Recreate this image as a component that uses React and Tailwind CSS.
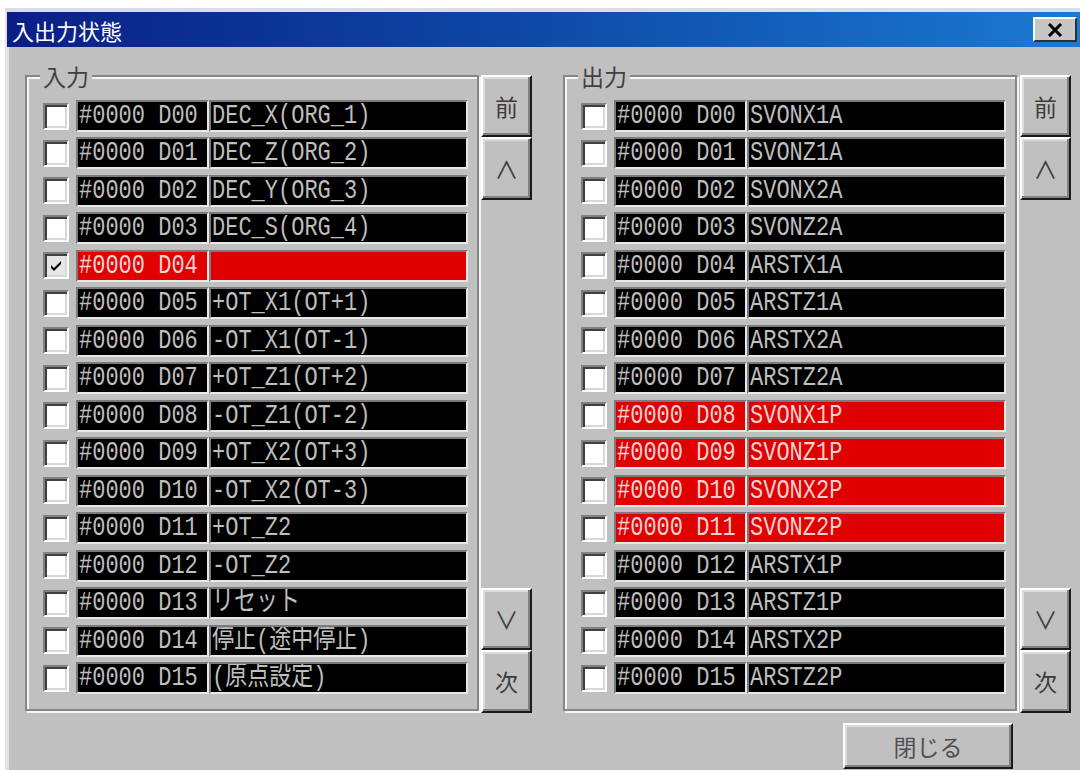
import React from "react";

const inputs = [
  ["D00", "DEC_X(ORG_1)"],
  ["D01", "DEC_Z(ORG_2)"],
  ["D02", "DEC_Y(ORG_3)"],
  ["D03", "DEC_S(ORG_4)"],
  ["D04", "", true, true],
  ["D05", "+OT_X1(OT+1)"],
  ["D06", "-OT_X1(OT-1)"],
  ["D07", "+OT_Z1(OT+2)"],
  ["D08", "-OT_Z1(OT-2)"],
  ["D09", "+OT_X2(OT+3)"],
  ["D10", "-OT_X2(OT-3)"],
  ["D11", "+OT_Z2"],
  ["D12", "-OT_Z2"],
  ["D13", "リセット"],
  ["D14", "停止(途中停止)"],
  ["D15", "(原点設定)"],
];

const outputs = [
  ["D00", "SVONX1A"],
  ["D01", "SVONZ1A"],
  ["D02", "SVONX2A"],
  ["D03", "SVONZ2A"],
  ["D04", "ARSTX1A"],
  ["D05", "ARSTZ1A"],
  ["D06", "ARSTX2A"],
  ["D07", "ARSTZ2A"],
  ["D08", "SVONX1P", true],
  ["D09", "SVONZ1P", true],
  ["D10", "SVONX2P", true],
  ["D11", "SVONZ2P", true],
  ["D12", "ARSTX1P"],
  ["D13", "ARSTZ1P"],
  ["D14", "ARSTX2P"],
  ["D15", "ARSTZ2P"],
];

const mono = { fontFamily: '"Liberation Mono", "Noto Sans CJK JP", monospace' };
const jp = { fontFamily: '"Noto Sans CJK JP", sans-serif' };

function CheckBox({ checked }) {
  return (
    <div
      className={`w-[26px] h-[27px] shrink-0 border-2 border-t-[#808080] border-l-[#808080] border-b-white border-r-white shadow-[inset_2px_2px_0_#404040,inset_-2px_-2px_0_#d8d8d8] flex items-center justify-center ${
        checked ? "bg-[#e6e6e6]" : "bg-white"
      }`}
    >
      {checked && (
        <svg width="14" height="14" viewBox="0 0 14 14">
          <path d="M2 6 L5 9 L12 2 L12 5 L5 12 L2 9 Z" fill="#000" />
        </svg>
      )}
    </div>
  );
}

function Field({ text, red, width }) {
  return (
    <div
      className={`h-[32px] shrink-0 border-2 border-t-[#7a7a7a] border-l-[#7a7a7a] border-b-[#e8e8e8] border-r-[#e8e8e8] flex items-center pl-[1px] overflow-hidden whitespace-pre text-[22px] ${
        red ? "bg-[#e10000] text-[#f6d2d2]" : "bg-black text-[#bebebe]"
      } ${width}`}
      style={mono}
    >
      <span className="inline-block leading-[26px] scale-y-125 translate-y-[1px]">{text}</span>
    </div>
  );
}

function Row({ row }) {
  const [addr, label, red, checked] = row;
  return (
    <div className="flex items-center h-[32px]">
      <CheckBox checked={checked} />
      <div className="flex ml-[7px]">
        <Field text={`#0000 ${addr}`} red={red} width="w-[133px]" />
        <Field text={label} red={red} width="w-[259px]" />
      </div>
    </div>
  );
}

function Group({ title, rows }) {
  return (
    <div className="relative w-[454px] h-[636px] border-2 border-[#868686] shadow-[inset_2px_2px_0_#f4f4f4,2px_2px_0_#f4f4f4]">
      <div
        className="absolute -top-[14px] left-[13px] px-[3px] bg-[#c0c0c0] text-[23px] leading-[26px] text-[#404040]"
        style={jp}
      >
        {title}
      </div>
      <div className="flex flex-col gap-[5.47px] pt-[23px] pl-[16px]">
        {rows.map((r) => (
          <Row key={r[0]} row={r} />
        ))}
      </div>
    </div>
  );
}

function PushButton({ children, className = "" }) {
  return (
    <div
      className={`flex items-center justify-center bg-[#c0c0c0] border-2 border-t-white border-l-white border-r-[#1a1a1a] border-b-[#1a1a1a] shadow-[inset_-2px_-2px_0_#808080,inset_2px_2px_0_#dcdcdc] text-[#3c3c3c] ${className}`}
      style={jp}
    >
      {children}
    </div>
  );
}

function Pager() {
  return (
    <div className="w-[51px] h-[638px] flex flex-col justify-between">
      <div className="flex flex-col">
        <PushButton className="h-[62px] text-[23px]">前</PushButton>
        <PushButton className="h-[63px] text-[24px]">∧</PushButton>
      </div>
      <div className="flex flex-col">
        <PushButton className="h-[62px] text-[24px]">∨</PushButton>
        <PushButton className="h-[63px] text-[23px]">次</PushButton>
      </div>
    </div>
  );
}

export default function App() {
  return (
    <div className="w-[1080px] h-[770px] bg-white pt-[8px] pl-[5px] overflow-hidden">
      <div className="h-[762px] bg-[#c0c0c0] border-t-[4px] border-l-[4px] border-t-[#d9dde6] border-l-[#e2e2e2] flex flex-col">
        {/* title bar */}
        <div className="h-[35px] ml-[-2px] bg-gradient-to-r from-[#0b1d86] via-[#0f4aa8] to-[#1c7ad2] flex items-center justify-between pl-[5px] pr-[3px]">
          <span className="text-white text-[22px] leading-none" style={jp}>
            入出力状態
          </span>
          <div className="w-[44px] h-[25px] bg-[#c6c6c6] border-2 border-t-white border-l-white border-r-[#303030] border-b-[#303030] flex items-center justify-center">
            <svg width="16" height="14" viewBox="0 0 16 14">
              <path d="M2 1 L14 13 M14 1 L2 13" stroke="#000" strokeWidth="3" />
            </svg>
          </div>
        </div>

        {/* body */}
        <div className="flex pt-[28px] pl-[16px]">
          <Group title="入力" rows={inputs} />
          <div className="ml-[2px]">
            <Pager />
          </div>
          <div className="ml-[31px]">
            <Group title="出力" rows={outputs} />
          </div>
          <div className="ml-[3px]">
            <Pager />
          </div>
        </div>

        <div className="flex pl-[834px] pt-[10px]">
          <PushButton className="w-[170px] h-[46px] text-[23px] text-[#505050]">閉じる</PushButton>
        </div>
      </div>
    </div>
  );
}
